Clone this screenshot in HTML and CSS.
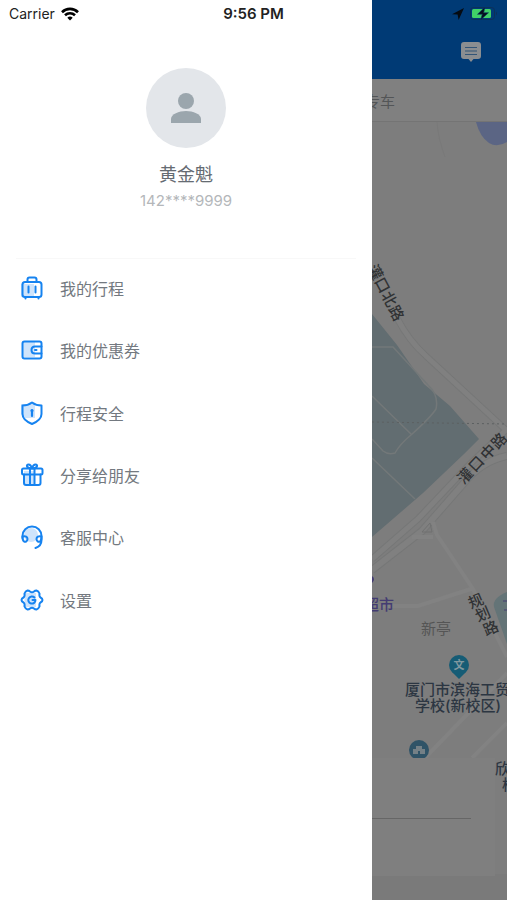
FILE: index.html
```
<!DOCTYPE html>
<html lang="zh-CN">
<head>
    <meta charset="UTF-8">
    <meta name="viewport" content="width=device-width, initial-scale=1.0">
    <title>个人中心</title>
    <link rel="stylesheet" href="styles.css">
</head>
<body>
    <div class="status-bar">
        <div class="status-left">
            <span>Carrier</span>
            <svg width="18" height="14" viewBox="0 0 18 14" fill="none" stroke="#000" stroke-width="2.6">
                <path d="M1 5.2a11.4 11.4 0 0 1 16 0"/>
                <path d="M4 8.3a7.2 7.2 0 0 1 10 0"/>
                <path d="M6.3 10.8a3.9 3.9 0 0 1 5.4 0L9 13.5z" fill="#000" stroke="none"/>
            </svg>
        </div>
        <strong>9:56 PM</strong>
        <div class="status-right">
            <svg width="12" height="12" viewBox="0 0 12 12"><path d="M0 6.3 12 0 6.6 12 5.6 6.5z" fill="#050b12"/></svg>
            <svg width="28" height="13" viewBox="0 0 28 13">
                <rect x=".5" y=".5" width="24" height="12" rx="3" fill="none" stroke="#0c3157"/>
                <rect x="2" y="2" width="19" height="9" rx="1.5" fill="#41d167"/>
                <path d="M15 0 7.500 7.300h4.800L10.500 13 18.500 5.700h-4.800z" fill="#06101c" stroke="#063767" stroke-width=".6"/>
                <path d="M26 4.500q2 2 0 4z" fill="#0c3157"/>
            </svg>
        </div>
    </div>

    <div class="app">
        <aside class="drawer">
            <section class="profile">
                <div class="avatar">
                    <svg width="30" height="30" viewBox="0 0 30 30" fill="#9ba6ad">
                        <circle cx="15" cy="8" r="8"/>
                        <path d="M0 30v-4c0-5 8-8 15-8s15 3 15 8v4z"/>
                    </svg>
                </div>
                <h1>黄金魁</h1>
                <p>142****9999</p>
            </section>

            <nav>
                <ul class="menu">
                    <li><a href="#">
                        <svg viewBox="0 0 24 24">
                            <path class="tint" d="M1 8h13v13H1z"/>
                            <rect x="2.500" y="6" width="19" height="15" rx="2.500"/>
                            <path d="M7.500 6V3.500Q7.500 1.500 9.500 1.500h5q2 0 2 2V6M8.500 10.500v6M15.500 10.500v6M5.500 21v1.500M18.500 21v1.500"/>
                        </svg>
                        我的行程</a></li>
                    <li><a href="#">
                        <svg viewBox="0 0 24 24">
                            <path class="tint" d="M2 4h13v15H2z"/>
                            <rect x="2.500" y="3.500" width="19" height="17" rx="2"/>
                            <path d="M21.500 8.500H15q-3.500 0-3.500 3.500t3.500 3.500h6.500M15 12h1.500"/>
                        </svg>
                        我的优惠券</a></li>
                    <li><a href="#">
                        <svg viewBox="0 0 24 24">
                            <path class="tint" d="M1 3h14v14H5L1 13z"/>
                            <path d="M12 1.500Q16 4.500 21.500 4.500V13q0 6-9.500 10Q2.500 19 2.500 13V4.500Q8 4.500 12 1.500z"/>
                            <path d="M12 9.500V15" stroke-width="2.200"/><circle cx="12" cy="9.500" r=".6" class="solid"/>
                        </svg>
                        行程安全</a></li>
                    <li><a href="#">
                        <svg viewBox="0 0 24 24">
                            <path class="tint" d="M4 8h10v14H4z"/>
                            <rect x="2" y="5.500" width="20.500" height="6" rx="1.500"/>
                            <path d="M4 11.500V20q0 2 2 2h12.500q2 0 2-2v-8.500M10 6v16M14.500 6v16"/>
                            <path d="M12 5.500C6 5.500 6 1.500 8.500 1.500S12 5.500 12 5.500s1-4 3.500-4S18 5.500 12 5.500z"/>
                        </svg>
                        分享给朋友</a></li>
                    <li><a href="#">
                        <svg viewBox="0 0 24 24">
                            <circle class="tint" cx="11" cy="10" r="7"/>
                            <path d="M2.500 13V11a9.500 9.500 0 0 1 19 0v4q0 6-6 8"/>
                            <path d="M2.500 11.500c3-1 5 .5 5 2.500s-2 3.500-3.500 2.500-1.500-3-1.500-5zM21.500 11.500c-3-1-5 .5-5 2.500s2 3.500 3.500 2.500 1.500-3 1.500-5z"/>
                        </svg>
                        客服中心</a></li>
                    <li><a href="#">
                        <svg viewBox="0 0 24 24">
                            <path class="tint" d="M4 5h12v14H5z"/>
                            <path d="M7.500 2.500q1.500 0 2.500 1 2 1.500 4 0 1-1 2.500-1 2 .5 3 3-.5 3 1 4 2 1 2 2.500t-2 2.500q-1.500 1-1 4-1 2.500-3 3-1.500 0-2.500-1-2-1.500-4 0-1 1-2.500 1-2-.5-3-3 .5-3-1-4-2-1-2-2.500t2-2.500q1.500-1 1-4 1-2.500 3-3z"/>
                            <path d="M14.500 9.500A3.600 3.600 0 1 0 15.500 12H12.500"/>
                        </svg>
                        设置</a></li>
                </ul>
            </nav>
        </aside>

        <main class="home">
            <header class="home-header">
                <button type="button" aria-label="消息">
                    <svg width="20" height="20" viewBox="0 0 20 20">
                        <path d="M3 0h14q3 0 3 3v11q0 3-3 3h-4.500L10 20l-2.500-3H3q-3 0-3-3V3q0-3 3-3z" fill="#8b8e91"/>
                        <path d="M4 5.500h12M4 9h12M4 12.500h12" stroke="#335577" stroke-width="1.200"/>
                    </svg>
                </button>
            </header>
            <div class="tabs"><span>专车</span></div>

            <div class="map">
                <svg class="map-canvas" viewBox="372 122 135 778" preserveAspectRatio="xMinYMin slice">
                    <path d="M476 122h31v20q-10 6-18 1-9-6-13-21z" fill="#5b6584"/>
                    <path d="M437 122q1 16 8 35" fill="none" stroke="#797979"/>
                    <!-- 绿地 -->
                    <path d="M372 314 397 345 424 384 450 406 479 439 464 454 423 493 372 537z" fill="#626d71"/>
                    <path d="M507 592q-15 6-13 15l13 37z" fill="#647477"/>
                    <g fill="none" stroke="#737879" stroke-width="1.500">
                        <path d="M372 347h21l35 38q11 10 8 24-5 8-25 26-11 9-16 18-7 2-12-2l-11-12M372 396l39 38M372 458l43 41"/>
                    </g>
                    <!-- 道路 -->
                    <path d="M397 318q12 23 29 38l81 75M372 559l46-40 52-55 37-35" fill="none" stroke="#767777" stroke-width="7"/>
                    <path d="M397 318q12 23 29 38l81 75M372 559l46-40 52-55 37-35" fill="none" stroke="#808080" stroke-width="5"/>
                    <path d="M372 570l50-39 42-48q18-22 43-27" fill="none" stroke="#767777" stroke-width="8"/>
                    <path d="M372 570l50-39 42-48q18-22 43-27" fill="none" stroke="#808080" stroke-width="6"/>
                    <g fill="none" stroke="#828282" stroke-width="4">
                        <path d="M433 522l4 13 36 54 34 68M372 606h46l53-17M425 758l82-85M472 758l35-35M412 537h21"/>
                    </g>
                    <path d="M430 523l-8 9h10z" fill="none" stroke="#707171"/>
                    <path d="M372 422l135 2" stroke="#5c6061" stroke-dasharray="2 3"/>

                    <g class="road-name">
                        <text transform="translate(367 268) rotate(62)">灌</text>
                        <text transform="translate(374 281) rotate(62)">口</text>
                        <text transform="translate(381 295) rotate(62)">北</text>
                        <text transform="translate(388 309) rotate(62)">路</text>
                        <text transform="translate(464 485) rotate(-47)">灌</text>
                        <text transform="translate(475 473) rotate(-47)">口</text>
                        <text transform="translate(487 461) rotate(-47)">中</text>
                        <text transform="translate(498 450) rotate(-47)">路</text>
                        <text transform="translate(471 609) rotate(-23)">规</text>
                        <text transform="translate(478 622) rotate(-23)">划</text>
                        <text transform="translate(486 636) rotate(-23)">路</text>
                    </g>
                    <text class="shop" x="364" y="610">超市</text>
                    <path d="M372 576q4 3 0 7z" fill="#443c72"/>
                    <path d="M503 601h4M504 610h3" stroke="#443c72"/>
                    <text class="village" x="421" y="634">新亭</text>
                    <circle cx="459" cy="665" r="10" fill="#165c75"/>
                    <path d="M452 672h14l-7 7z" fill="#165c75"/>
                    <text class="pin" x="459" y="669">文</text>
                    <text class="school" x="405" y="695">厦门市滨海工贸</text>
                    <text class="school" x="415" y="711">学校(新校区)</text>
                    <circle cx="419" cy="750" r="10" fill="#2f5367"/>
                    <path d="M413 754v-5h3v-3h6v3h3v5h-5v-3h-2v3z" fill="#748086"/>
                    <path d="M372 874h135v26H372z" fill="#7a7a7a"/>
                    <text class="school" x="495" y="774">欣</text>
                    <text class="school" x="502" y="790">校</text>
                </svg>
                <div class="order-card"><hr></div>
            </div>
        </main>
    </div>
</body>
</html>
```
FILE: styles.css
```
* {
    box-sizing: border-box;
}

body {
    margin: 0;
    font-family: Inter, "Noto Sans CJK SC", sans-serif;
    background-color: #fff;
}

h1, p, ul {
    margin: 0;
    padding: 0;
}

/* 状态栏 */
.status-bar {
    position: absolute;
    top: 0;
    left: 0;
    right: 0;
    z-index: 2;
    display: grid;
    grid-template-columns: 1fr auto 1fr;
    align-items: center;
    height: 27px;
    padding: 0 9px;
    font-size: 14px;
    color: #222;
}

.status-bar strong {
    font-size: 15px;
    font-weight: 600;
}

.status-left,
.status-right {
    display: flex;
    align-items: center;
    gap: 6px;
}

.status-right {
    justify-content: flex-end;
}

.app {
    display: flex;
    min-height: 100vh;
}

/* 侧边栏 */
.drawer {
    width: 73.4%;
    background-color: #fff;
}

.profile {
    display: flex;
    flex-direction: column;
    align-items: center;
    height: 259px;
    margin: 0 16px;
    padding-top: 68px;
    border-bottom: 1px solid #f8f8f8;
}

.avatar {
    display: flex;
    align-items: center;
    justify-content: center;
    width: 80px;
    height: 80px;
    border-radius: 50%;
    background-color: #e3e6ea;
}

.profile h1 {
    margin-top: 13px;
    font-size: 18px;
    font-weight: 400;
    line-height: 28px;
    color: #656b72;
}

.profile p {
    font-size: 15px;
    line-height: 24px;
    color: #b4b7ba;
}

.menu {
    display: grid;
    grid-template-rows: repeat(6, 1fr);
    height: 374px;
    margin-top: -2px;
    list-style: none;
}

.menu a {
    display: flex;
    align-items: center;
    gap: 16px;
    height: 100%;
    padding: 0 20px;
    font-size: 16px;
    color: #737980;
    text-decoration: none;
}

.menu svg {
    width: 24px;
    height: 24px;
    fill: none;
    stroke: #1683f0;
    stroke-width: 2;
    stroke-linejoin: round;
    stroke-linecap: round;
}

.menu .tint {
    fill: #cfe4fb;
    stroke: none;
}

.menu .solid {
    fill: #1683f0;
}

/* 首页(遮罩下) */
.home {
    flex: 1;
    display: flex;
    flex-direction: column;
    min-width: 0;
    background-color: #7d7d7d;
}

.home-header {
    display: flex;
    justify-content: flex-end;
    align-items: flex-end;
    height: 79px;
    padding: 0 26px 17px 0;
    background-color: #003a75;
}

.home-header button {
    display: flex;
    padding: 0;
    border: 0;
    background: none;
}

.tabs {
    display: flex;
    align-items: center;
    height: 43px;
    background-color: #808080;
    border-bottom: 1px solid #747474;
    font-size: 15px;
    color: #535557;
}

.tabs span {
    display: flex;
    justify-content: flex-end;
    width: 23px;
    overflow: hidden;
    white-space: nowrap;
}

.map {
    position: relative;
    flex: 1;
    display: flex;
    flex-direction: column;
    justify-content: flex-end;
    padding: 0 12px 24px 0;
    overflow: hidden;
}

.map-canvas {
    position: absolute;
    inset: 0;
    width: 100%;
    height: 100%;
}

.map-canvas text {
    font-size: 15px;
}

.map-canvas .road-name {
    fill: #303234;
    font-weight: 500;
}

.map-canvas .shop {
    fill: #443c72;
    font-weight: 500;
}

.map-canvas .village {
    fill: #555;
}

.map-canvas .pin {
    font-size: 11px;
    font-weight: 700;
    fill: #80989f;
    text-anchor: middle;
}

.map-canvas .school {
    fill: #2c3642;
    font-weight: 500;
}

.order-card {
    position: relative;
    height: 118px;
    padding: 60px 24px 0 0;
    background-color: #7f7f7f;
}

.order-card hr {
    height: 1px;
    margin: 0;
    border: 0;
    background-color: #666;
}
```
